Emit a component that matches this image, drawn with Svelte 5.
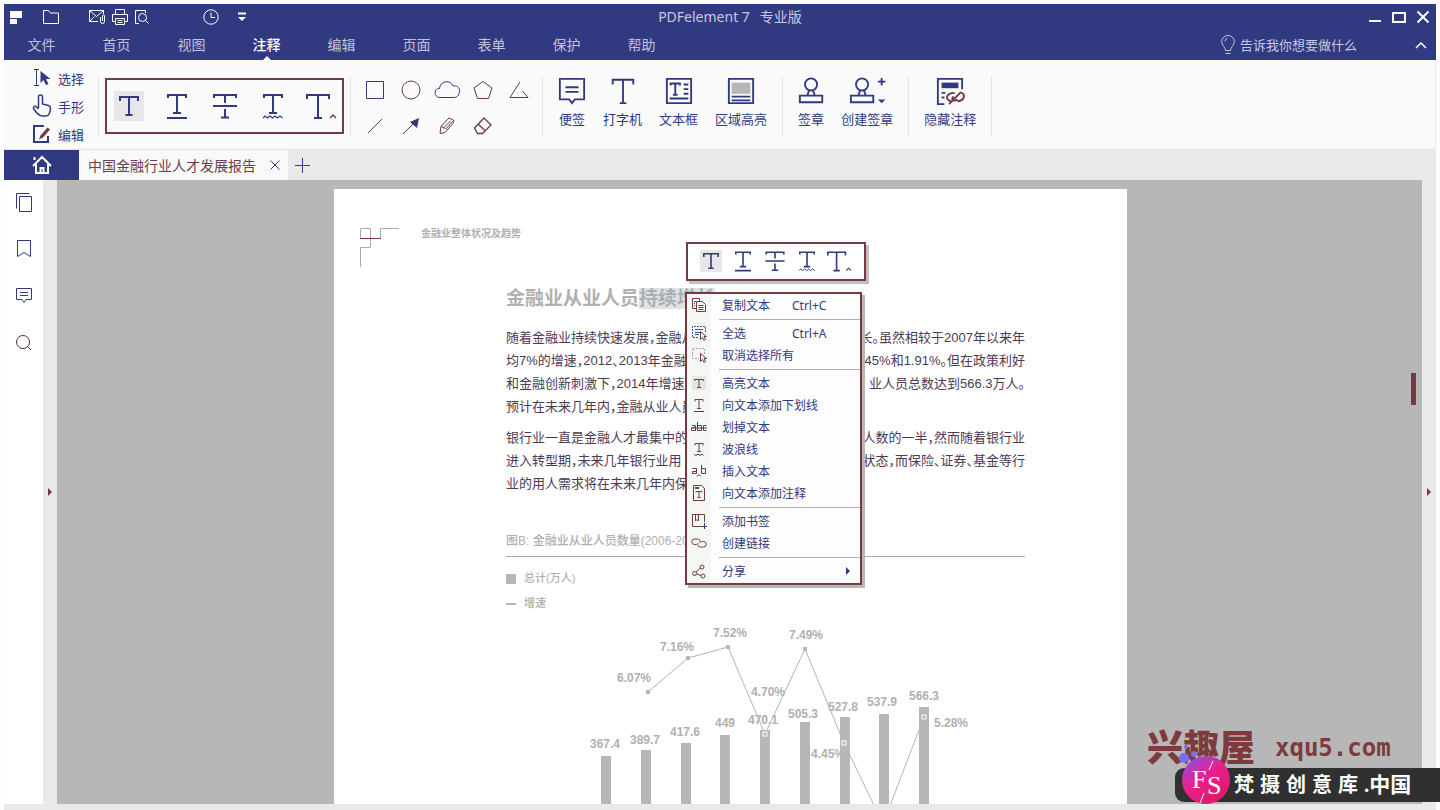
<script>
    const menus = ['文件', '首页', '视图', '注释', '编辑', '页面', '表单', '保护', '帮助'];
    let activeMenu = '注释';
    let activeMark = 'highlight';

    // Stroke drawings, each in its own view box
    const icons = {
        logo: { box: [12, 14], body: '<path d="M0 1h12v7H0zM0 9h7v5H0z" fill="currentColor" stroke="none"/><path d="M7 9.500h5" stroke="#313a80"/>' },
        folder: { box: [18, 16], body: '<path d="M1.500 14.500v-13h5l2 2.500h8v10.500z"/>' },
        mail: { box: [18, 16], body: '<path d="M10 12.500H1.500v-11h14V5M1.500 1.500l7 6 7-6M1.500 12.500l5-5M12.500 8v4.500a2 2 0 0 0 4 0V7a1 1 0 0 0-2 0v5"/>' },
        print: { box: [16, 16], body: '<path d="M3.500 5.500v-5h9v5M3.500 12.500h-3v-7h15v7h-3M3.500 9.500h9v6h-9zM5.500 11.500h5M5.500 13.500h5"/>' },
        preview: { box: [16, 16], body: '<path d="M5 14.500H1.500V1.500h10V4"/><circle cx="8.500" cy="8.500" r="4"/><path d="M11.500 11.500l3 3"/>' },
        clock: { box: [16, 16], body: '<circle cx="8" cy="8" r="7.200"/><path d="M8 3.500V8.500h4"/>' },
        more: { box: [8, 10], body: '<path d="M0 1.500h8" stroke-width="2"/><path d="M0 5h8L4 9z" fill="currentColor" stroke="none"/>' },
        minimize: { box: [14, 14], body: '<path d="M1 11h12" stroke-width="2"/>' },
        maximize: { box: [14, 14], body: '<path d="M1 3h12v9H1z" stroke-width="2"/>' },
        close: { box: [14, 14], body: '<path d="M1.500 1.500l11 11M12.500 1.500l-11 11" stroke-width="2"/>' },
        bulb: { box: [14, 20], body: '<path d="M4.500 15.500c0-3.500-3.800-4.500-3.800-9a6.300 6 0 0 1 12.600 0c0 4.500-3.800 5.500-3.800 9zM4.500 18.500h5M4 6.500a3 3 0 0 1 2.500-3"/>' },
        chevron: { box: [12, 8], body: '<path d="M1 7l5-5 5 5" stroke-width="1.500"/>' },
        select: { box: [18, 20], body: '<path d="M1 1.500h5M3.500 1.500v16M1 17.500h5"/><path d="M7.500 3v12l3-3 2.500 5 2.500-1-2.500-5h4.500z" fill="currentColor" stroke="none"/>' },
        hand: { box: [20, 24], body: '<path d="M6.500 14V3a2 2 0 0 1 4 0v7l6 1.500c1.500.5 2 1.500 2 3-.3 4-1.500 7.500-5 7.500h-3C6.500 22 4 18.500 1.500 14.500c-.5-2 1.500-3 3-1.500l2 2" stroke-width="1.500"/>' },
        edit: { box: [20, 20], body: '<path d="M12 2H2v16h14v-6" stroke-width="2"/><path d="M8.500 11.500l7-8 2.500 2-7 8-4 2z" fill="#6b3a48" stroke="none"/>' },
        highlight: { box: [30, 30], body: '<path d="M6 10V6h18v4M15 6v18M11.500 24h7" stroke-width="2"/>' },
        underline: { box: [30, 30], body: '<path d="M6 7V4h18v3M15 4v18M11 22h8M5 27h20" stroke-width="2"/>' },
        strike: { box: [30, 30], body: '<path d="M4 7V4h22v3M15 4v8M3 15h24M15 18v8M11 26.500h8" stroke-width="2"/>' },
        squiggle: { box: [30, 30], body: '<path d="M6 7V4h18v3M15 4v18M11 22h8" stroke-width="2"/><path d="M5 27l2-2 2.500 2 2.500-2 2.500 2 2.500-2 2.500 2 2.500-2 2.500 2" stroke-width="1.200"/>' },
        caret: { box: [30, 30], body: '<path d="M1 8V4h22v4M12 4v23M8 27h8" stroke-width="2"/><path d="M24 27l3-3L30 27" stroke="#7d3b3e" stroke-width="1.500"/>' },
        square: { box: [24, 24], body: '<path d="M3.500 3.500h17v17h-17z"/>' },
        circle: { box: [24, 24], body: '<circle cx="12" cy="12" r="9" stroke="#6b3a48"/>' },
        cloud: { box: [26, 24], body: '<path d="M6 19.500C-.5 19.500-.5 10 5.500 10.500 6 2.500 17 1.500 19 8c5-1 8 3 6 7.500-1 3-3 4-5 4z"/>' },
        pentagon: { box: [24, 24], body: '<path d="M12 3.500l9 6.500-3.500 10.500h-11L3 10z" stroke="#6b3a48"/>' },
        triangle: { box: [24, 24], body: '<path d="M13 4L3 19.500H21L15.500 13" stroke="#6b3a48"/>' },
        line: { box: [24, 24], body: '<path d="M5 19L19 5" stroke="#6b3a48"/>' },
        arrow: { box: [24, 24], body: '<path d="M4 20L14 10" stroke="#6b3a48"/><path d="M20 4l-2 10-7-6z" fill="currentColor" stroke="none"/>' },
        pencil: { box: [24, 24], body: '<path d="M5 19.500l1-7 8-8.500 5 2.500-1 3-8 9zM6 12.500l4 2M8.500 14l7-7M10.500 15.500l7-8" stroke="#6b3a48"/>' },
        eraser: { box: [24, 24], body: '<path d="M3.500 14L13 4l7 7-8.500 8.500h-5zM7 10l7.500 7" stroke="#6b3a48" stroke-width="1.300"/>' },
        note: { box: [30, 30], body: '<path d="M2 2h26v22H18l-3 4-3-4H2zM8 11h14M8 16h14" stroke-width="2"/>' },
        type: { box: [30, 30], body: '<path d="M4 8V3h22v5M15 3v25M11.500 28h7" stroke-width="2"/>' },
        textbox: { box: [30, 30], body: '<path d="M2 2h26v26H2zM6 9V7h10v2M11 7v12M8.500 19h5M20 8h5M20 13h5M20 18h5M5 23h20" stroke-width="2"/>' },
        area: { box: [30, 30], body: '<path d="M2 2h26v26H2z" stroke-width="2"/><path d="M5 6h20v12H5z" fill="#b7b7b7" stroke="none"/><path d="M5 21h20M5 25h20" stroke-width="2"/>' },
        stamp: { box: [28, 30], body: '<circle cx="14" cy="8" r="6.500" stroke-width="2"/><path d="M12 14l-2 6M16 14l2 6M2 20h24v7H2z" stroke-width="2"/>' },
        stampNew: { box: [40, 30], body: '<circle cx="14" cy="8" r="6.500" stroke-width="2"/><path d="M12 14l-2 6M16 14l2 6M2 20h24v7H2zM31 5h8M35 1v8" stroke-width="2"/><path d="M31 24h8l-4 4z" fill="currentColor" stroke="none"/>' },
        hide: { box: [30, 30], body: '<path d="M28 13V2H2v27h7M6 17h4M6 22h3" stroke-width="2"/><path d="M6 6h18v6H6z" fill="currentColor" stroke="none"/><path d="M14 29L27 16M16 26c-7-2-5-9 4-9M23 26c9-1 8-9 4-9M19 21c-4 3 0 6 4 3" stroke="#6b3a48" stroke-width="2"/>' },
        home: { box: [20, 20], body: '<path d="M1 11l9-9 9 9M4 9v9h12V9M2.500 2v3M8.500 18v-5h3v5" stroke-width="2"/>' },
        cross: { box: [10, 10], body: '<path d="M.5.500l9 9M9.500.500l-9 9"/>' },
        plus: { box: [16, 16], body: '<path d="M8.500 1v15M1 8.500h15"/>' },
        pages: { box: [18, 20], body: '<path d="M1.500 16.500V1.500h13M4.500 4.500h12v15h-12z"/>' },
        bookmark: { box: [16, 20], body: '<path d="M1.500 1.500h13v16L8 13.500l-6.500 4z"/>' },
        comment: { box: [18, 18], body: '<path d="M1.500 1.500h15v11H11l-2 3-2-3H1.500zM5 5.500h8M5 8.500h8"/>' },
        search: { box: [18, 18], body: '<circle cx="8" cy="8" r="6.500" stroke="#4a3040"/><path d="M12.500 12.500l3.500 3.500" stroke="#4a3040"/>' },
        copy: { box: [16, 16], body: '<path d="M5 11.500H1.500v-10h7V4M5.500 4.500h6l3 3v7h-9zM3 4.500h2M3 6.500h1M3 8.500h1M7.500 8.500h5M7.500 10.500h5M7.500 12.500h5"/>' },
        selectAll: { box: [16, 16], body: '<path d="M14.500 7V1.500h-13v11H8" stroke="#2f57a0" stroke-dasharray="2 1"/><path d="M4 4.500h8M4 7.500h5M4 9.500h4" stroke="#2f57a0"/><path d="M9.500 6.500v8l2-2 1.500 3 1.500-1-1.500-3h2.500z"/>' },
        deselect: { box: [16, 16], body: '<path d="M13.500 7V1.500h-12v10H8" stroke="#aaa" stroke-dasharray="2 1"/><path d="M9.500 6.500v8l2-2 1.500 3 1.500-1-1.500-3h2.500z"/>' },
        tMark: { box: [16, 16], body: '<path d="M1 1h14v14H1z" fill="#e8e4e4" stroke="none"/><path d="M3.500 6V4.500h9V6M8 4.500V12M6 12.500h4"/>' },
        tUnder: { box: [16, 16], body: '<path d="M4 4.500V2.500h8v2M8 2.500v9M6 11.500h4"/><path d="M3 14.500h10" stroke="#313a80"/>' },
        abc: { box: [16, 16], body: '<path d="M4.500 12V6.500H1M4.500 8.500H1.500l-1 1v2h4M6.500 3v8.500h4v-5h-4M15.500 6.500h-3v5h3"/><path d="M0 9h16" stroke="#313a80"/>' },
        tWave: { box: [16, 16], body: '<path d="M4 4.500V2.500h8v2M8 2.500v8M6 10.500h4"/><path d="M3 13l1.500 1.500L7 13l2 1.500 2-1.500 1.500 1.500" stroke="#313a80"/>' },
        insert: { box: [16, 16], body: '<path d="M1.500 5.500h4v5h-4v-2h4M10.500 2v8.500h4v-5h-4"/><path d="M6 13.500l2-2 2 2" stroke="#313a80"/>' },
        tNote: { box: [16, 16], body: '<path d="M2.500 15.500V.500h8l3 3v12zM5 7.500v-1h6v1M8 6.500v6M6.500 12.500h3"/><path d="M4 2h4v2H4z" fill="currentColor" stroke="none"/>' },
        addMark: { box: [16, 16], body: '<path d="M11 13.500H1.500v-12h12V9M4.500 1.500V8L6 6.500 7.500 8V1.500"/><path d="M13.500 10v6M11 13.500h5" stroke="#313a80"/>' },
        link: { box: [16, 16], body: '<path d="M5.500 9.500H3.500a2.700 2.700 0 0 1 0-5.500h3a2.700 2.700 0 0 1 2.500 4M10.500 6.500h2a2.700 2.700 0 0 1 0 5.500h-3a2.700 2.700 0 0 1-2.500-4"/>' },
        share: { box: [16, 16], body: '<circle cx="3.500" cy="10.500" r="2"/><circle cx="11" cy="4" r="2"/><circle cx="12" cy="13" r="2"/><path d="M5 9l4.500-4M5.500 11l4.500 1.500"/>' }
    };

    const tools = [
        { icon: 'select', label: '选择' },
        { icon: 'hand', label: '手形' },
        { icon: 'edit', label: '编辑' }
    ];

    const marks = [
        { icon: 'highlight', label: '高亮文本' },
        { icon: 'underline', label: '下划线' },
        { icon: 'strike', label: '划掉文本' },
        { icon: 'squiggle', label: '波浪线' },
        { icon: 'caret', label: '插入文本' }
    ];

    const shapes = ['square', 'circle', 'cloud', 'pentagon', 'triangle', 'line', 'arrow', 'pencil', 'eraser'];

    const actionGroups = [
        [
            { icon: 'note', label: '便签' },
            { icon: 'type', label: '打字机' },
            { icon: 'textbox', label: '文本框' },
            { icon: 'area', label: '区域高亮' }
        ],
        [
            { icon: 'stamp', label: '签章' },
            { icon: 'stampNew', label: '创建签章' }
        ],
        [{ icon: 'hide', label: '隐藏注释' }]
    ];

    const contextMenu = [
        [{ icon: 'copy', label: '复制文本', key: 'Ctrl+C' }],
        [
            { icon: 'selectAll', label: '全选', key: 'Ctrl+A' },
            { icon: 'deselect', label: '取消选择所有' }
        ],
        [
            { icon: 'tMark', label: '高亮文本' },
            { icon: 'tUnder', label: '向文本添加下划线' },
            { icon: 'abc', label: '划掉文本' },
            { icon: 'tWave', label: '波浪线' },
            { icon: 'insert', label: '插入文本' },
            { icon: 'tNote', label: '向文本添加注释' }
        ],
        [
            { icon: 'addMark', label: '添加书签' },
            { icon: 'link', label: '创建链接' }
        ],
        [{ icon: 'share', label: '分享', sub: true }]
    ];

    // Each line is cut where the context menu covers it
    const paragraphs = [
        [
            ['随着金融业持续快速发展，金融从', '长。虽然相较于2007年以来年'],
            ['均7%的增速，2012、2013年金融', '4.45%和1.91%。但在政策利好'],
            ['和金融创新刺激下，2014年增速', '业人员总数达到566.3万人。'],
            ['预计在未来几年内，金融从业人员', '']
        ],
        [
            ['银行业一直是金融人才最集中的', '人数的一半，然而随着银行业'],
            ['进入转型期，未来几年银行业用', '状态，而保险、证券、基金等行'],
            ['业的用人需求将在未来几年内保', '']
        ]
    ];

    const bars = [
        { x: 95, top: 140, value: '367.4', lx: 99, ly: 132 },
        { x: 135, top: 134, value: '389.7', lx: 139, ly: 128 },
        { x: 175, top: 127, value: '417.6', lx: 179, ly: 120 },
        { x: 214, top: 119, value: '449', lx: 219, ly: 111 },
        { x: 254, top: 114, value: '470.1', lx: 257, ly: 108 },
        { x: 294, top: 106, value: '505.3', lx: 297, ly: 102 },
        { x: 334, top: 101, value: '527.8', lx: 337, ly: 95 },
        { x: 373, top: 98, value: '537.9', lx: 376, ly: 90 },
        { x: 413, top: 91, value: '566.3', lx: 418, ly: 84 }
    ];

    const rates = [
        { x: 142, y: 76, value: '6.07%', lx: 128, ly: 66 },
        { x: 182, y: 42, value: '7.16%', lx: 171, ly: 35 },
        { x: 222, y: 31, value: '7.52%', lx: 224, ly: 21 },
        { x: 259, y: 118, value: '4.70%', lx: 262, ly: 80, onBar: true },
        { x: 299, y: 33, value: '7.49%', lx: 300, ly: 23 },
        { x: 338, y: 127, value: '4.45%', lx: 322, ly: 142, onBar: true },
        { x: 377, y: 208 },
        { x: 418, y: 101, value: '5.28%', lx: 445, ly: 111, onBar: true }
    ];
    const ratePoints = rates.map((r) => `${r.x},${r.y}`).join(' ');
</script>

{#snippet icon(name, scale = 1)}
    <svg
        class="icon"
        width={icons[name].box[0] * scale}
        height={icons[name].box[1] * scale}
        viewBox="0 0 {icons[name].box[0]} {icons[name].box[1]}"
        fill="none"
        stroke="currentColor"
        aria-hidden="true"
    >
        {@html icons[name].body}
    </svg>
{/snippet}

<div class="window">
    <header class="titlebar">
        <div class="titlebar__row">
            <div class="quick">
                {@render icon('logo')}
                <button class="quick__btn quick__btn--folder" aria-label="打开">{@render icon('folder')}</button>
                <button class="quick__btn quick__btn--mail" aria-label="邮件">{@render icon('mail')}</button>
                <button class="quick__btn" aria-label="打印">{@render icon('print')}</button>
                <button class="quick__btn" aria-label="预览">{@render icon('preview')}</button>
                <button class="quick__btn quick__btn--clock" aria-label="历史">{@render icon('clock')}</button>
                <button class="quick__btn quick__btn--more" aria-label="更多">{@render icon('more')}</button>
            </div>
            <div class="titlebar__title"><span>PDFelement 7</span><span>专业版</span></div>
            <div class="controls">
                <button aria-label="最小化">{@render icon('minimize')}</button>
                <button aria-label="最大化">{@render icon('maximize')}</button>
                <button aria-label="关闭">{@render icon('close')}</button>
            </div>
        </div>
        <div class="titlebar__menus">
            <nav class="menus">
                {#each menus as menu}
                    <button
                        class="menus__item {activeMenu === menu ? 'menus__item--active' : ''}"
                        on:click={() => (activeMenu = menu)}
                    >{menu}</button>
                {/each}
            </nav>
            <label class="tell">
                {@render icon('bulb')}
                <input type="text" placeholder="告诉我你想要做什么" aria-label="告诉我你想要做什么" />
            </label>
            <button class="collapse" aria-label="收起功能区">{@render icon('chevron')}</button>
        </div>
    </header>

    <div class="ribbon">
        <div class="group group--tools">
            {#each tools as tool}
                <button class="tool"><span class="tool__icon">{@render icon(tool.icon)}</span>{tool.label}</button>
            {/each}
        </div>
        <div class="group group--marks">
            <div class="marks">
                {#each marks as mark}
                    <button
                        class="mark {activeMark === mark.icon ? 'mark--active' : ''}"
                        aria-label={mark.label}
                        on:click={() => (activeMark = mark.icon)}
                    >{@render icon(mark.icon)}</button>
                {/each}
            </div>
        </div>
        <div class="group group--shapes">
            {#each shapes as shape}
                <button class="shape" aria-label={shape}>{@render icon(shape)}</button>
            {/each}
        </div>
        {#each actionGroups as actions}
            <div class="group group--actions">
                {#each actions as action}
                    <button class="action">{@render icon(action.icon, 28 / 30)}{action.label}</button>
                {/each}
            </div>
        {/each}
    </div>

    <div class="tabs">
        <button class="tabs__home" aria-label="主页">{@render icon('home')}</button>
        <div class="tabs__tab">
            <span>中国金融行业人才发展报告</span>
            <button aria-label="关闭标签">{@render icon('cross')}</button>
        </div>
        <button class="tabs__add" aria-label="新标签">{@render icon('plus')}</button>
    </div>

    <div class="main">
        <aside class="sidebar">
            <button aria-label="页面缩略图">{@render icon('pages')}</button>
            <button aria-label="书签">{@render icon('bookmark')}</button>
            <button aria-label="注释">{@render icon('comment')}</button>
            <button aria-label="搜索">{@render icon('search')}</button>
        </aside>
        <button class="edge" aria-label="展开左侧"><span class="edge__arrow"></span></button>

        <div class="workspace">
            <article class="page">
                <div class="page__head">
                    <svg width="39" height="39" viewBox="0 0 39 39" fill="none" stroke="#aaa" aria-hidden="true">
                        <path d="M.5 10V.5h10v19M39 .5H20.500v9.500M10 19.500H.5V39" />
                        <path d="M0 10.500h21" stroke="#7d3b3e" />
                    </svg>
                    <span>金融业整体状况及趋势</span>
                </div>
                <div class="page__body">
                    <h1>金融业从业人员<mark>持续增长</mark></h1>
                    {#each paragraphs as lines}
                        <div class="para">
                            {#each lines as [start, end]}
                                <div class="para__line"><span>{start}</span><span>{end}</span></div>
                            {/each}
                        </div>
                    {/each}
                    <h2>图B: 金融业从业人员数量(2006-2014)</h2>
                    <ul class="legend">
                        <li><span class="legend__box"></span>总计(万人)</li>
                        <li><span class="legend__dash"></span>增速</li>
                    </ul>
                    <svg class="chart" width="519" height="194" viewBox="0 0 519 194">
                        <polyline points={ratePoints} />
                        {#each rates as rate}
                            {#if rate.value}
                                <text x={rate.lx} y={rate.ly}>{rate.value}</text>
                            {/if}
                        {/each}
                        {#each bars as bar}
                            <rect class="chart__bar" x={bar.x} y={bar.top} width="10" height={194 - bar.top} />
                            <text x={bar.lx} y={bar.ly}>{bar.value}</text>
                        {/each}
                        {#each rates as rate}
                            <rect
                                class={rate.onBar ? 'chart__ring' : 'chart__dot'}
                                x={rate.x - 2}
                                y={rate.y - 2}
                                width="4"
                                height="4"
                            />
                        {/each}
                    </svg>
                </div>

                <div class="mini">
                    {#each marks as mark}
                        <button
                            class="mini__btn {activeMark === mark.icon ? 'mark--active' : ''}"
                            aria-label={mark.label}
                            on:click={() => (activeMark = mark.icon)}
                        >{@render icon(mark.icon, 24 / 30)}</button>
                    {/each}
                </div>

                <div class="context" role="menu">
                    {#each contextMenu as section}
                        <div class="context__section">
                            {#each section as item}
                                <button class="context__item" role="menuitem">
                                    <span class="context__icon">{@render icon(item.icon)}</span>
                                    <span class="context__label">{item.label}</span>
                                    {#if item.key}<span class="context__key">{item.key}</span>{/if}
                                    {#if item.sub}<span class="context__sub"></span>{/if}
                                </button>
                            {/each}
                        </div>
                    {/each}
                </div>
            </article>
            <div class="thumb"></div>
        </div>
        <button class="edge" aria-label="展开右侧"><span class="edge__arrow"></span></button>
    </div>

    <div class="brand">
        <div class="brand__site"><strong>兴趣屋</strong><span>xqu5.com</span></div>
        <div class="brand__bar">
            <svg width="56" height="56" viewBox="0 0 56 56" aria-hidden="true">
                <defs>
                    <linearGradient id="badge" x1="0" y1="0" x2="0.7" y2="1">
                        <stop offset="0" stop-color="#7a5cf0" />
                        <stop offset="0.5" stop-color="#e8208c" />
                        <stop offset="1" stop-color="#e0186c" />
                    </linearGradient>
                </defs>
                <circle cx="9" cy="9" r="5" fill="#7a6cf0" />
                <circle cx="19" cy="5" r="3" fill="#7a6cf0" />
                <circle cx="11" cy="-2" r="2" fill="#7a6cf0" />
                <circle cx="31" cy="31" r="24" fill="url(#badge)" />
                <text x="17" y="39">F</text>
                <text x="32" y="45">S</text>
                <path d="M38 12l-4 9M29 44l-4 10" stroke="#fff" />
            </svg>
            <span>梵</span><span>摄</span><span>创</span><span>意</span><span>库</span><span class="brand__tail">.中国</span>
        </div>
    </div>
</div>

<style>
    :global(body) {
        background: #fdfdfd;
    }

    .window {
        --navy: #313a80;
        --maroon: #733c42;
        --gray: #b7b7b7;
        --pale: #e9e9e9;
        position: relative;
        display: flex;
        flex-direction: column;
        height: 100vh;
        box-sizing: border-box;
        padding: 4px 4px 0;
        overflow: hidden;
        color: var(--navy);
        font-family: "Noto Sans", "Noto Sans CJK SC", sans-serif;
        font-size: 13px;
    }

    .window *,
    .window *::before {
        box-sizing: border-box;
    }

    button {
        display: flex;
        align-items: center;
        justify-content: center;
        padding: 0;
        border: none;
        background: none;
        color: inherit;
        font: inherit;
        white-space: nowrap;
        cursor: pointer;
    }

    .icon {
        display: block;
        flex: none;
        overflow: visible;
    }

    /* Title bar */
    .titlebar {
        background: var(--navy);
        color: #fff;
    }

    .titlebar__row {
        display: grid;
        grid-template-columns: 1fr auto 1fr;
        align-items: center;
        height: 26px;
        padding: 0 6px;
    }

    .quick {
        display: flex;
        align-items: center;
        gap: 6px;
    }

    .quick__btn--folder {
        margin-left: 14px;
    }

    .quick__btn--mail {
        margin-left: 22px;
    }

    .quick__btn--clock {
        margin-left: 47px;
    }

    .quick__btn--more {
        margin-left: 13px;
    }

    .titlebar__title {
        display: flex;
        gap: 10px;
        margin-left: 20px;
        color: #c6c8de;
        font-size: 14px;
        line-height: 20px;
    }

    .controls {
        display: flex;
        justify-content: flex-end;
        gap: 10px;
    }

    .titlebar__menus {
        display: flex;
        align-items: center;
        height: 30px;
        padding-right: 9px;
    }

    .menus {
        display: flex;
        flex: 1;
    }

    .menus__item {
        position: relative;
        width: 75px;
        height: 30px;
        padding-bottom: 2px;
        color: #c0c2da;
        font-size: 14px;
    }

    .menus__item--active {
        color: #fff;
        font-weight: 500;
    }

    .menus__item--active::after {
        content: '';
        position: absolute;
        bottom: 0;
        left: 50%;
        border: 4px solid transparent;
        border-top: none;
        border-bottom-color: #fafafa;
        transform: translateX(-50%);
    }

    .tell {
        display: flex;
        align-items: center;
        gap: 5px;
        margin-right: 55px;
        color: #c6c8de;
    }

    .tell input {
        width: 120px;
        padding: 0;
        border: none;
        outline: none;
        background: none;
        color: #fff;
        font: inherit;
    }

    .tell input::placeholder {
        color: #c6c8de;
        opacity: 1;
    }

    /* Ribbon */
    .ribbon {
        display: flex;
        align-items: center;
        height: 90px;
        padding-top: 3px;
        background: #fafafa;
        border-right: 1px solid var(--pale);
        border-bottom: 1px solid #e2e2e2;
    }

    .group {
        display: flex;
        align-items: center;
        height: 60px;
        border-right: 1px solid #e4e4e4;
    }

    .group--tools {
        flex-direction: column;
        align-items: flex-start;
        justify-content: center;
        width: 95px;
        padding-left: 28px;
    }

    .tool {
        height: 28px;
        flex: none;
        gap: 6px;
    }

    .tool__icon {
        display: flex;
        justify-content: center;
        width: 20px;
    }

    .group--marks {
        padding: 0 6px;
    }

    .marks {
        display: flex;
        gap: 18px;
        padding: 11px 6px 11px 7px;
        border: 2px solid var(--maroon);
    }

    .mark {
        width: 30px;
        height: 30px;
    }

    .mark--active {
        background: #e7e7e9;
    }

    .group--shapes {
        display: grid;
        grid-template-columns: repeat(5, 36px);
        grid-auto-rows: 36px;
        align-content: center;
        padding: 4px 5px 0 6px;
    }

    .group--actions {
        gap: 17px;
        padding: 0 15px 6px;
    }

    .action {
        flex-direction: column;
        gap: 4px;
        line-height: 20px;
    }

    /* Tabs */
    .tabs {
        display: flex;
        height: 30px;
        background: var(--pale);
    }

    .tabs__home {
        width: 75px;
        background: var(--navy);
        color: #fff;
    }

    .tabs__tab {
        display: flex;
        align-items: center;
        gap: 14px;
        padding: 0 8px 0 9px;
        background: #f9f9f9;
        color: #6b3f4c;
        font-size: 14px;
    }

    .tabs__tab button {
        color: var(--navy);
    }

    .tabs__add {
        margin-left: 6px;
    }

    /* Work area */
    .main {
        display: flex;
        flex: 1;
        min-height: 0;
        border-bottom: 6px solid var(--pale);
    }

    .sidebar {
        display: flex;
        flex-direction: column;
        align-items: center;
        gap: 27px;
        width: 39px;
        padding-top: 12px;
        background: #fff;
    }

    .sidebar button {
        height: 20px;
    }

    .edge {
        width: 14px;
        background: var(--pale);
    }

    .edge__arrow {
        border: 4px solid transparent;
        border-right: none;
        border-left-color: var(--maroon);
    }

    .workspace {
        position: relative;
        display: flex;
        flex: 1;
        justify-content: center;
        padding: 9px 18px 0 0;
        background: var(--gray);
        overflow: hidden;
    }

    .thumb {
        position: absolute;
        top: 193px;
        right: 6px;
        width: 5px;
        height: 32px;
        background: var(--maroon);
    }

    .page {
        position: relative;
        width: 793px;
        padding-top: 39px;
        background: #fff;
        color: #b0b0b0;
        font-family: "Liberation Sans", "Noto Sans CJK SC", sans-serif;
    }

    .page__head {
        display: flex;
        gap: 22px;
        padding-left: 26px;
        font-size: 10px;
        font-weight: 700;
        line-height: 12px;
    }

    .page__body {
        padding: 0 102px 0 172px;
    }

    h1 {
        margin: 20px 0 16px;
        font-size: 19px;
        line-height: 23px;
    }

    mark {
        background: #dfe1e4;
        color: #a9adb5;
    }

    .para {
        margin-bottom: 8px;
        color: #4e3a55;
        line-height: 23px;
        font-feature-settings: "halt";
    }

    .para__line {
        display: flex;
        justify-content: space-between;
        height: 23px;
        white-space: nowrap;
    }

    h2 {
        margin: 36px 0 9px;
        padding-bottom: 5px;
        border-bottom: 1px solid #aaa;
        font-size: 12px;
        font-weight: 500;
        line-height: 20px;
    }

    .legend {
        margin: 0;
        padding: 0;
        list-style: none;
        font-size: 11px;
        font-weight: 500;
        line-height: 25px;
    }

    .legend li {
        display: flex;
        align-items: center;
        gap: 8px;
    }

    .legend__box {
        width: 10px;
        height: 10px;
        background: var(--gray);
    }

    .legend__dash {
        width: 10px;
        height: 2px;
        background: var(--gray);
    }

    .chart {
        display: block;
        overflow: visible;
    }

    .chart text {
        fill: #b0b0b0;
        font-size: 12px;
        font-weight: 700;
        text-anchor: middle;
    }

    .chart polyline {
        fill: none;
        stroke: #b3b3b3;
    }

    .chart__bar,
    .chart__dot {
        fill: var(--gray);
    }

    .chart__ring {
        fill: var(--gray);
        stroke: #fff;
    }

    /* Floating toolbar and context menu */
    .mini {
        position: absolute;
        top: 53px;
        left: 352px;
        display: flex;
        gap: 10px;
        padding: 6px 14px 7px 12px;
        border: 2px solid var(--maroon);
        background: #fff;
        color: var(--navy);
        box-shadow: 3px 3px 0 #c5bfbe;
    }

    .mini__btn {
        width: 22px;
        height: 22px;
    }

    .context {
        position: absolute;
        top: 103px;
        left: 351px;
        width: 177px;
        padding-bottom: 1px;
        border: 2px solid var(--maroon);
        background: linear-gradient(to right, #f5f7f4 24px, #fdfdfd 24px);
        box-shadow: 3px 3px 0 #bdb6b4;
        color: var(--navy);
        font-family: "Noto Sans", "Noto Sans CJK SC", sans-serif;
        font-size: 12px;
    }

    .context__section + .context__section::before {
        content: '';
        display: block;
        height: 1px;
        margin: 3px 0 2px 32px;
        background: #b0b0b0;
    }

    .context__item {
        justify-content: flex-start;
        width: 100%;
        height: 22px;
    }

    .context__icon {
        display: flex;
        justify-content: center;
        width: 24px;
        color: var(--maroon);
    }

    .context__label {
        min-width: 70px;
        margin-left: 11px;
        text-align: left;
    }

    .context__sub {
        margin: 0 10px 0 auto;
        border: 4px solid transparent;
        border-right: none;
        border-left-color: var(--navy);
    }

    /* Site marks over the corner */
    .brand {
        position: absolute;
        right: 0;
        bottom: 0;
        width: 293px;
    }

    .brand__site {
        display: flex;
        align-items: center;
        gap: 20px;
        height: 40px;
        color: #7d3b3e;
    }

    .brand__site strong {
        font-size: 36px;
        font-weight: 900;
        line-height: 38px;
    }

    .brand__site span {
        font-family: "DejaVu Sans Mono", monospace;
        font-size: 24px;
        font-weight: 700;
    }

    .brand__bar {
        display: flex;
        align-items: center;
        gap: 6px;
        height: 34px;
        margin: 0 0 8px 28px;
        border-radius: 9px 0 0 9px;
        background: #303030;
        color: #fff;
        font-family: "Liberation Serif", "Noto Sans CJK SC", serif;
        font-size: 20px;
        font-weight: 700;
        line-height: 34px;
    }

    .brand__bar svg {
        margin-right: -3px;
        margin-top: -26px;
        margin-bottom: -10px;
        overflow: visible;
    }

    .brand__bar text {
        fill: #fff;
        font-size: 26px;
        font-weight: 400;
    }

    .brand__tail {
        font-size: 21px;
    }
</style>
